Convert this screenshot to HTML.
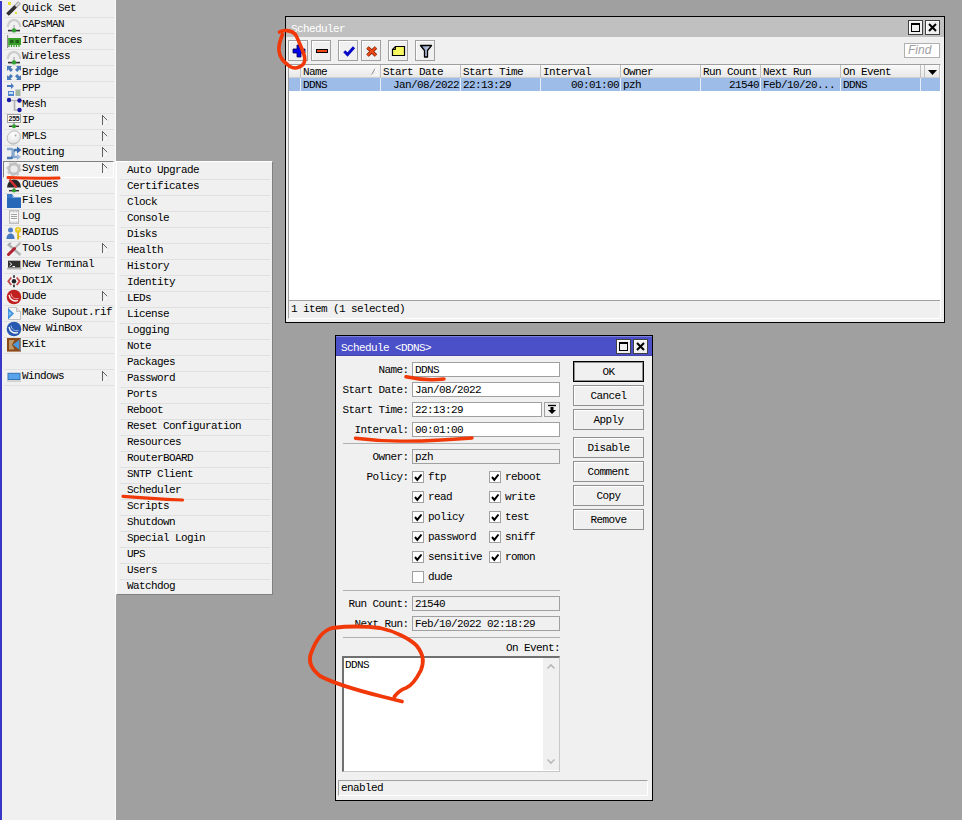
<!DOCTYPE html>
<html><head><meta charset="utf-8"><title>WinBox</title>
<style>
html,body{margin:0;padding:0}
body{width:962px;height:820px;overflow:hidden;background:#a0a0a0;position:relative;color:#000;font-family:'Liberation Mono',monospace;font-size:11px;letter-spacing:-0.6px;}
div,span{box-sizing:border-box}
.a{position:absolute}
.t{position:absolute;white-space:pre;line-height:16px;height:16px}
.side{left:0;top:0;width:116px;height:820px;background:#f0f0f0}
.sep{position:absolute;height:1px;background:#e0e0e0}
.win{position:absolute;background:#f0f0f0;border:1px solid #000}
.tb{position:absolute;width:15px;height:15px;background:#f0f0f0;border:1px solid #404040;box-shadow:inset 1px 1px 0 #fff}
.btn{position:absolute;width:20px;height:21px;border:1px solid #a0a0a0;background:#f0f0f0;box-shadow:inset 1px 1px 0 #fff}
.fld{position:absolute;height:15px;border:1px solid #a0a0a0;background:#fff;line-height:15px;padding-left:2px;white-space:pre}
.ro{background:#f0f0f0}
.lbl{position:absolute;text-align:right;white-space:pre;line-height:15px;height:15px;padding-top:1px}
.pb{position:absolute;left:237px;width:71px;height:21px;border:1px solid #909090;background:#f0f0f0;text-align:center;line-height:21px;box-shadow:inset 1px 1px 0 #fff}
.cb{position:absolute;width:12px;height:12px;border:1px solid #a0a0a0;background:#fff}
.hs{position:absolute;top:0;width:1px;height:13px;background:#c0c0c0}
.rs{position:absolute;top:0;width:1px;height:13px;background:#e8eef8}
</style></head><body>
<div class="a side"><div class="a" style="left:0;top:1px;width:2px;height:819px;background:#3838c8"></div><div class="a" style="left:115px;top:0;width:1px;height:820px;background:#fafafa"></div><div class="sep" style="left:4px;top:17px;width:110px"></div><svg class="a" style="left:6px;top:1px" width="16" height="16" viewBox="0 0 16 16"><path d="M1.5 13.5L10 5" stroke="#303030" stroke-width="3.8" stroke-linecap="butt"/><path d="M9.5 5.5L13.500 1.500" stroke="#a0a0a0" stroke-width="3.800"/><path d="M10 5L13 2" stroke="#e8e8e8" stroke-width="1.4"/><rect x="2" y="1" width="3" height="3" fill="#e0e030"/><rect x="9" y="11" width="2" height="2" fill="#e0e030"/></svg><span class="t" style="left:22px;top:0px">Quick Set</span><div class="sep" style="left:4px;top:33px;width:110px"></div><svg class="a" style="left:6px;top:17px" width="16" height="16" viewBox="0 0 16 16"><path d="M1.800 10A6.200 7 0 0 1 14.200 10" fill="none" stroke="#cccccc" stroke-width="2.200"/><rect x="7.3" y="8" width="1.4" height="6" fill="#b0b0b0"/><rect x="2" y="12.800" width="12" height="1.600" fill="#303030"/><circle cx="8" cy="13.400" r="2.200" fill="#30a030"/></svg><span class="t" style="left:22px;top:16px">CAPsMAN</span><div class="sep" style="left:4px;top:49px;width:110px"></div><svg class="a" style="left:6px;top:33px" width="16" height="16" viewBox="0 0 16 16"><rect x="1" y="2" width="1.2" height="13" fill="#909090"/><rect x="2.2" y="5" width="12.8" height="7" fill="#38a028"/><rect x="4" y="7" width="3.5" height="3" fill="#206018"/><rect x="9.5" y="7" width="3.5" height="3" fill="#206018"/><path d="M3 12v2M5.5 12v2M8 12v2M10.5 12v2M13 12v2" stroke="#38a028" stroke-width="1.2"/></svg><span class="t" style="left:22px;top:32px">Interfaces</span><div class="sep" style="left:4px;top:65px;width:110px"></div><svg class="a" style="left:6px;top:49px" width="16" height="16" viewBox="0 0 16 16"><path d="M1.800 10A6.200 7 0 0 1 14.200 10" fill="none" stroke="#cccccc" stroke-width="2.200"/><rect x="7.3" y="8" width="1.4" height="6" fill="#b0b0b0"/><rect x="2" y="12.800" width="12" height="1.600" fill="#303030"/><circle cx="8" cy="13.400" r="2.200" fill="#30a030"/></svg><span class="t" style="left:22px;top:48px">Wireless</span><div class="sep" style="left:4px;top:81px;width:110px"></div><svg class="a" style="left:6px;top:65px" width="16" height="16" viewBox="0 0 16 16"><g fill="#4a7ab8"><path d="M1 1h5L4.6 2.4 7 4.8 4.8 7 2.4 4.6 1 6z"/><path d="M15 1v5l-1.4-1.4L11.2 7 9 4.8l2.4-2.4L10 1z"/><path d="M1 15v-5l1.4 1.4L4.800 9 7 11.2 4.600 13.600 6 15z"/><path d="M15 15h-5l1.4-1.4L9 11.2 11.2 9l2.400 2.400L15 10z"/></g></svg><span class="t" style="left:22px;top:64px">Bridge</span><div class="sep" style="left:4px;top:97px;width:110px"></div><svg class="a" style="left:6px;top:81px" width="16" height="16" viewBox="0 0 16 16"><path d="M1 4h4V2l3 3-3 3V6H1z" fill="#4878c0"/><rect x="2" y="10" width="6" height="5" fill="#5088d0"/><rect x="3" y="11" width="4" height="2" fill="#c8e0f8"/><rect x="9" y="8" width="6" height="7" fill="#d0d0d0"/><path d="M10 10h4M10 12h4M10 14h4" stroke="#70a070" stroke-width="1"/></svg><span class="t" style="left:22px;top:80px">PPP</span><div class="sep" style="left:4px;top:113px;width:110px"></div><svg class="a" style="left:6px;top:97px" width="16" height="16" viewBox="0 0 16 16"><path d="M3 3.500H13" fill="none" stroke="#b0b0b0" stroke-width="1.400"/><path d="M8.500 3v10h5" fill="none" stroke="#b0b0b0" stroke-width="1.600"/><circle cx="3" cy="3" r="2.2" fill="#1818a0"/><circle cx="13.500" cy="3.500" r="2.200" fill="#1818a0"/><circle cx="13.500" cy="13" r="2.200" fill="#1818a0"/></svg><span class="t" style="left:22px;top:96px">Mesh</span><div class="sep" style="left:4px;top:129px;width:110px"></div><svg class="a" style="left:6px;top:113px" width="16" height="16" viewBox="0 0 16 16"><rect x="1.5" y="1.5" width="13" height="8" fill="#fff" stroke="#a0a0a0" stroke-width="1"/><text x="8" y="8.300" font-family="Liberation Sans,sans-serif" font-size="7" font-weight="bold" text-anchor="middle" fill="#202020" letter-spacing="-0.3">255</text><rect x="7.4" y="9" width="1.2" height="4" fill="#909090"/><rect x="3" y="12.600" width="10" height="1.400" fill="#303030"/><circle cx="8" cy="13.300" r="2" fill="#30a030"/></svg><span class="t" style="left:22px;top:112px">IP</span><svg style="position:absolute;left:102px;top:115px" width="7" height="11" viewBox="0 0 7 11"><path d="M0.5 0V10" stroke="#606060" stroke-width="1" fill="none"/><path d="M0.5 0.5L5.5 5.5" stroke="#606060" stroke-width="1" fill="none"/><path d="M5.5 5.5L1.5 9.500" stroke="#ffffff" stroke-width="1" fill="none"/></svg><div class="sep" style="left:4px;top:145px;width:110px"></div><svg class="a" style="left:6px;top:129px" width="16" height="16" viewBox="0 0 16 16"><defs><radialGradient id="mg" cx="0.35" cy="0.35" r="0.8"><stop offset="0" stop-color="#ffffff"/><stop offset="0.7" stop-color="#e8e8e8"/><stop offset="1" stop-color="#a8a8a8"/></radialGradient></defs><ellipse cx="7.800" cy="8.500" rx="6.300" ry="7" fill="url(#mg)" stroke="#b4b4b4" stroke-width="0.800" transform="rotate(40 7.8 8.5)"/><circle cx="9.500" cy="6.500" r="1" fill="#a8a8a8"/></svg><span class="t" style="left:22px;top:128px">MPLS</span><svg style="position:absolute;left:102px;top:131px" width="7" height="11" viewBox="0 0 7 11"><path d="M0.5 0V10" stroke="#606060" stroke-width="1" fill="none"/><path d="M0.5 0.5L5.5 5.5" stroke="#606060" stroke-width="1" fill="none"/><path d="M5.5 5.5L1.5 9.500" stroke="#ffffff" stroke-width="1" fill="none"/></svg><div class="sep" style="left:4px;top:161px;width:110px"></div><svg class="a" style="left:6px;top:145px" width="16" height="16" viewBox="0 0 16 16"><path d="M1 13h4c2 0 2-2 2-4s0-4 2-4h3" fill="none" stroke="#4878b0" stroke-width="2.600"/><path d="M1 4h4c2 0 2 2 2 4s0 4 2 4h3" fill="none" stroke="#88a8d0" stroke-width="2.400"/><path d="M11 1.500l4.500 3.500L11 8.500z" fill="#3868b0"/><path d="M11 9l4 3-4 3z" fill="#a0b8d8"/></svg><span class="t" style="left:22px;top:144px">Routing</span><svg style="position:absolute;left:102px;top:147px" width="7" height="11" viewBox="0 0 7 11"><path d="M0.5 0V10" stroke="#606060" stroke-width="1" fill="none"/><path d="M0.5 0.5L5.5 5.5" stroke="#606060" stroke-width="1" fill="none"/><path d="M5.5 5.5L1.5 9.500" stroke="#ffffff" stroke-width="1" fill="none"/></svg><div class="sep" style="left:4px;top:177px;width:110px"></div><div class="a" style="left:3px;top:161px;width:111px;height:17px;border:1px solid;border-color:#808080 #fff #fff #808080;background:#f4f4f4"></div><svg class="a" style="left:6px;top:161px" width="16" height="16" viewBox="0 0 16 16"><circle cx="8" cy="8" r="5" fill="none" stroke="#c0c0c0" stroke-width="3"/><circle cx="8" cy="8" r="6.800" fill="none" stroke="#c8c8c8" stroke-width="1.600" stroke-dasharray="2.6 2.7"/><circle cx="8" cy="8" r="3" fill="#ececec"/></svg><span class="t" style="left:22px;top:160px">System</span><svg style="position:absolute;left:102px;top:163px" width="7" height="11" viewBox="0 0 7 11"><path d="M0.5 0V10" stroke="#606060" stroke-width="1" fill="none"/><path d="M0.5 0.5L5.5 5.5" stroke="#606060" stroke-width="1" fill="none"/><path d="M5.5 5.5L1.5 9.500" stroke="#ffffff" stroke-width="1" fill="none"/></svg><div class="sep" style="left:4px;top:193px;width:110px"></div><svg class="a" style="left:6px;top:177px" width="16" height="16" viewBox="0 0 16 16"><path d="M1 10.500A7 8 0 0 1 15 10.500z" fill="#282828"/><path d="M3.500 2.500l7 8" stroke="#d83030" stroke-width="2.400"/><rect x="7.400" y="10" width="1.200" height="4" fill="#909090"/><rect x="3" y="13" width="10" height="1.400" fill="#303030"/><circle cx="8" cy="13.600" r="2" fill="#30a030"/></svg><span class="t" style="left:22px;top:176px">Queues</span><div class="sep" style="left:4px;top:209px;width:110px"></div><svg class="a" style="left:6px;top:193px" width="16" height="16" viewBox="0 0 16 16"><path d="M1 1h5l2 3h7v11H1z" fill="#3878c8"/><path d="M1 5h14v10H1z" fill="#2868b8"/><path d="M6 2l2 2.500h7V5H7z" fill="#a8c8f0"/></svg><span class="t" style="left:22px;top:192px">Files</span><div class="sep" style="left:4px;top:225px;width:110px"></div><svg class="a" style="left:6px;top:209px" width="16" height="16" viewBox="0 0 16 16"><rect x="3.500" y="1.500" width="9" height="13" fill="#f8f8f8" stroke="#b8b8b8" stroke-width="1"/><path d="M5 5.500h6M5 7.500h6M5 9.500h6" stroke="#a0a0a0" stroke-width="1"/><path d="M3.500 2.500h9M3.500 13.500h9" stroke="#c8c8c8" stroke-width="2" stroke-dasharray="2 1"/></svg><span class="t" style="left:22px;top:208px">Log</span><div class="sep" style="left:4px;top:241px;width:110px"></div><svg class="a" style="left:6px;top:225px" width="16" height="16" viewBox="0 0 16 16"><circle cx="4.500" cy="5" r="2.500" fill="#5080c8"/><path d="M0.500 14c0-4 2-5.500 4-5.500s4 1.500 4 5.500z" fill="#4878c0"/><circle cx="12" cy="5" r="3" fill="#e8c820"/><circle cx="12" cy="4.500" r="1" fill="#f8f0a0"/><rect x="11.200" y="7.500" width="1.800" height="7" fill="#d8b818"/><rect x="13" y="11" width="1.500" height="1.200" fill="#d8b818"/></svg><span class="t" style="left:22px;top:224px">RADIUS</span><div class="sep" style="left:4px;top:257px;width:110px"></div><svg class="a" style="left:6px;top:241px" width="16" height="16" viewBox="0 0 16 16"><path d="M3 4l11.500 10" stroke="#b0b4b4" stroke-width="2.400"/><path d="M1.300 4.800a3 3 0 0 1 4.500-2.800L4 4 5.500 5.500z" fill="#a8acac"/><path d="M14.500 1.500L8 8" stroke="#b8b8b8" stroke-width="2"/><path d="M8.500 7.500L2.500 13.500" stroke="#b02030" stroke-width="3" stroke-linecap="round"/></svg><span class="t" style="left:22px;top:240px">Tools</span><svg style="position:absolute;left:102px;top:243px" width="7" height="11" viewBox="0 0 7 11"><path d="M0.5 0V10" stroke="#606060" stroke-width="1" fill="none"/><path d="M0.5 0.5L5.5 5.5" stroke="#606060" stroke-width="1" fill="none"/><path d="M5.5 5.5L1.5 9.500" stroke="#ffffff" stroke-width="1" fill="none"/></svg><div class="sep" style="left:4px;top:273px;width:110px"></div><svg class="a" style="left:6px;top:257px" width="16" height="16" viewBox="0 0 16 16"><rect x="2" y="3.700" width="12.400" height="7" fill="#303030"/><rect x="1" y="10.700" width="14.200" height="1.800" fill="#b4b4b4"/><path d="M3.500 5.300l2.300 1.900-2.300 1.900" fill="none" stroke="#f8f8f8" stroke-width="1"/><path d="M6.500 9.500h2.500" stroke="#f8f8f8" stroke-width="1"/></svg><span class="t" style="left:22px;top:256px">New Terminal</span><div class="sep" style="left:4px;top:289px;width:110px"></div><svg class="a" style="left:6px;top:273px" width="16" height="16" viewBox="0 0 16 16"><circle cx="8" cy="8.200" r="2.200" fill="#202020"/><rect x="7.200" y="2.200" width="1.600" height="2.600" fill="#202020"/><rect x="7.200" y="11.600" width="1.600" height="2.600" fill="#202020"/><path d="M5.300 4.500L2.300 8.200 5.300 12M10.700 4.500L13.700 8.200 10.700 12" stroke="#c04848" stroke-width="1.800" fill="none"/></svg><span class="t" style="left:22px;top:272px">Dot1X</span><div class="sep" style="left:4px;top:305px;width:110px"></div><svg class="a" style="left:6px;top:289px" width="16" height="16" viewBox="0 0 16 16"><circle cx="8" cy="8" r="7.300" fill="#c02020"/><path d="M3 6c1 5 5 7 9 5.500" fill="none" stroke="#fff" stroke-width="1.300"/><path d="M5 4.500c0.500 4 3.500 6 7.500 5" fill="none" stroke="#f0b0b0" stroke-width="1"/></svg><span class="t" style="left:22px;top:288px">Dude</span><svg style="position:absolute;left:102px;top:291px" width="7" height="11" viewBox="0 0 7 11"><path d="M0.5 0V10" stroke="#606060" stroke-width="1" fill="none"/><path d="M0.5 0.5L5.5 5.5" stroke="#606060" stroke-width="1" fill="none"/><path d="M5.5 5.5L1.5 9.500" stroke="#ffffff" stroke-width="1" fill="none"/></svg><div class="sep" style="left:4px;top:321px;width:110px"></div><svg class="a" style="left:6px;top:305px" width="16" height="16" viewBox="0 0 16 16"><path d="M2.500 2.500h8l4 4v8h-12z" fill="#f4f4f4" stroke="#c0c0c0" stroke-width="1"/><path d="M10.500 2.500v4h4" fill="#e0e0e0" stroke="#c0c0c0" stroke-width="1"/><path d="M2 3L8 8.600 2 14.500z" fill="#3c8cdc"/><path d="M2.800 6L6 8.600 2.800 11.500z" fill="#78c0f4"/></svg><span class="t" style="left:22px;top:304px">Make Supout.rif</span><div class="sep" style="left:4px;top:337px;width:110px"></div><svg class="a" style="left:6px;top:321px" width="16" height="16" viewBox="0 0 16 16"><circle cx="8" cy="8" r="7.300" fill="#2858b0"/><path d="M3 6c1 5 5 7 9 5.500" fill="none" stroke="#fff" stroke-width="1.300"/><path d="M5 4.500c0.500 4 3.500 6 7.500 5" fill="none" stroke="#a8c0e8" stroke-width="1"/></svg><span class="t" style="left:22px;top:320px">New WinBox</span><div class="sep" style="left:4px;top:353px;width:110px"></div><svg class="a" style="left:6px;top:337px" width="16" height="16" viewBox="0 0 16 16"><rect x="1" y="1" width="14" height="13.600" fill="#8a4a18"/><path d="M3 3H8.500L6 7.800 8.500 12.600H3z" fill="#c09868"/><path d="M13.500 2.500V13L15 14.600V1z" fill="#808890"/><path d="M6.800 7.800L13 3V12.600z" fill="#4898e0"/></svg><span class="t" style="left:22px;top:336px">Exit</span><div class="sep" style="left:4px;top:369px;width:110px"></div><div class="sep" style="left:4px;top:385px;width:110px"></div><svg class="a" style="left:6px;top:369px" width="16" height="16" viewBox="0 0 16 16"><rect x="2" y="4.300" width="12" height="6.200" fill="#58a4ec" stroke="#3474b4" stroke-width="1"/><rect x="1" y="11.500" width="14" height="1.200" fill="#c0c0c0"/></svg><span class="t" style="left:22px;top:368px">Windows</span><svg style="position:absolute;left:102px;top:371px" width="7" height="11" viewBox="0 0 7 11"><path d="M0.5 0V10" stroke="#606060" stroke-width="1" fill="none"/><path d="M0.5 0.5L5.5 5.5" stroke="#606060" stroke-width="1" fill="none"/><path d="M5.5 5.5L1.5 9.500" stroke="#ffffff" stroke-width="1" fill="none"/></svg></div>
<div class="a" style="left:116px;top:161px;width:157px;height:434px;background:#f0f0f0;border:1px solid;border-color:#fff #808080 #808080 #fff"><span class="t" style="left:10px;top:0px">Auto Upgrade</span><div class="sep" style="left:3px;top:17px;width:150px"></div><span class="t" style="left:10px;top:16px">Certificates</span><div class="sep" style="left:3px;top:33px;width:150px"></div><span class="t" style="left:10px;top:32px">Clock</span><div class="sep" style="left:3px;top:49px;width:150px"></div><span class="t" style="left:10px;top:48px">Console</span><div class="sep" style="left:3px;top:65px;width:150px"></div><span class="t" style="left:10px;top:64px">Disks</span><div class="sep" style="left:3px;top:81px;width:150px"></div><span class="t" style="left:10px;top:80px">Health</span><div class="sep" style="left:3px;top:97px;width:150px"></div><span class="t" style="left:10px;top:96px">History</span><div class="sep" style="left:3px;top:113px;width:150px"></div><span class="t" style="left:10px;top:112px">Identity</span><div class="sep" style="left:3px;top:129px;width:150px"></div><span class="t" style="left:10px;top:128px">LEDs</span><div class="sep" style="left:3px;top:145px;width:150px"></div><span class="t" style="left:10px;top:144px">License</span><div class="sep" style="left:3px;top:161px;width:150px"></div><span class="t" style="left:10px;top:160px">Logging</span><div class="sep" style="left:3px;top:177px;width:150px"></div><span class="t" style="left:10px;top:176px">Note</span><div class="sep" style="left:3px;top:193px;width:150px"></div><span class="t" style="left:10px;top:192px">Packages</span><div class="sep" style="left:3px;top:209px;width:150px"></div><span class="t" style="left:10px;top:208px">Password</span><div class="sep" style="left:3px;top:225px;width:150px"></div><span class="t" style="left:10px;top:224px">Ports</span><div class="sep" style="left:3px;top:241px;width:150px"></div><span class="t" style="left:10px;top:240px">Reboot</span><div class="sep" style="left:3px;top:257px;width:150px"></div><span class="t" style="left:10px;top:256px">Reset Configuration</span><div class="sep" style="left:3px;top:273px;width:150px"></div><span class="t" style="left:10px;top:272px">Resources</span><div class="sep" style="left:3px;top:289px;width:150px"></div><span class="t" style="left:10px;top:288px">RouterBOARD</span><div class="sep" style="left:3px;top:305px;width:150px"></div><span class="t" style="left:10px;top:304px">SNTP Client</span><div class="sep" style="left:3px;top:321px;width:150px"></div><span class="t" style="left:10px;top:320px">Scheduler</span><div class="sep" style="left:3px;top:337px;width:150px"></div><span class="t" style="left:10px;top:336px">Scripts</span><div class="sep" style="left:3px;top:353px;width:150px"></div><span class="t" style="left:10px;top:352px">Shutdown</span><div class="sep" style="left:3px;top:369px;width:150px"></div><span class="t" style="left:10px;top:368px">Special Login</span><div class="sep" style="left:3px;top:385px;width:150px"></div><span class="t" style="left:10px;top:384px">UPS</span><div class="sep" style="left:3px;top:401px;width:150px"></div><span class="t" style="left:10px;top:400px">Users</span><div class="sep" style="left:3px;top:417px;width:150px"></div><span class="t" style="left:10px;top:416px">Watchdog</span></div>
<div class="win" style="left:285px;top:16px;width:660px;height:307px"><div class="a" style="left:0;top:0;width:658px;height:20px;background:#c0c0c0"></div><span class="t" style="left:5px;top:4px;color:#fff">Scheduler</span><div class="tb" style="left:622px;top:3px"><svg width="13" height="13" viewBox="0 0 13 13" style="display:block"><rect x="2.500" y="2.500" width="8" height="8" fill="none" stroke="#000"/><rect x="2" y="2" width="9" height="2" fill="#000"/></svg></div><div class="tb" style="left:639px;top:3px"><svg width="13" height="13" viewBox="0 0 13 13" style="display:block"><path d="M3 3l7 7M10 3l-7 7" stroke="#000" stroke-width="2"/></svg></div><div class="btn" style="left:2px;top:23px"><svg width="20" height="20" viewBox="0 0 20 20" style="position:absolute;left:-1px;top:-1px"><path d="M9 5h4v4h4v4h-4v4H9v-4H5V9h4z" fill="#0000e8" stroke="#000050" stroke-width="0.8"/></svg></div><div class="btn" style="left:25px;top:23px"><svg width="20" height="20" viewBox="0 0 20 20" style="position:absolute;left:-1px;top:-1px"><rect x="5.500" y="9.500" width="11" height="3" fill="#f04818" stroke="#000" stroke-width="1"/></svg></div><div class="btn" style="left:52px;top:23px"><svg width="20" height="20" viewBox="0 0 20 20" style="position:absolute;left:-1px;top:-1px"><path d="M6.300 11.300L9.500 14.500L16 7.200" fill="none" stroke="#0808c8" stroke-width="3"/></svg></div><div class="btn" style="left:75px;top:23px"><svg width="20" height="20" viewBox="0 0 20 20" style="position:absolute;left:-1px;top:-1px"><path d="M6.500 7.500L15 15.500M15 7.500L6.500 15.500" fill="none" stroke="#702000" stroke-width="3.600"/><path d="M6.500 7.500L15 15.500M15 7.500L6.500 15.500" fill="none" stroke="#f04818" stroke-width="2.200"/></svg></div><div class="btn" style="left:102px;top:23px"><svg width="20" height="20" viewBox="0 0 20 20" style="position:absolute;left:-1px;top:-1px"><path d="M7.500 6.500H16.500V15.500H4.500V9.500z" fill="#f8f860" stroke="#000" stroke-width="1.200"/><path d="M4.500 9.500H7.500V6.500" fill="none" stroke="#000" stroke-width="1"/></svg></div><div class="btn" style="left:129px;top:23px"><svg width="20" height="20" viewBox="0 0 20 20" style="position:absolute;left:-1px;top:-1px"><defs><linearGradient id="fg" x1="0" y1="0" x2="1" y2="0"><stop offset="0" stop-color="#7888b0"/><stop offset="1" stop-color="#e0e8f8"/></linearGradient></defs><path d="M5.500 5.500H16.500L12.500 10.500V17H9.500V10.500z" fill="url(#fg)" stroke="#000" stroke-width="1.300" stroke-linejoin="round"/></svg></div><div class="a" style="left:618px;top:26px;width:36px;height:15px;border:1px solid #b0b0b0;background:#fff;font:italic 12px 'Liberation Sans',sans-serif;letter-spacing:0;color:#a0a0a0;line-height:13px;padding-left:3px">Find</div><div class="a" style="left:2px;top:47px;width:653px;height:255px;border:1px solid;border-color:#a0a0a0 #fff #fff #a0a0a0"></div><div class="a" style="left:2px;top:48px;width:652px;height:235px;background:#fff"><div class="a" style="left:0;top:0;width:652px;height:13px;background:linear-gradient(#fafafa,#e8e8e8);border-bottom:1px solid #d0d0d0"></div><div class="hs" style="left:12px"></div><span class="t" style="left:15px;top:-1px;">Name</span><div class="hs" style="left:92px"></div><span class="t" style="left:95px;top:-1px;">Start Date</span><div class="hs" style="left:172px"></div><span class="t" style="left:175px;top:-1px;">Start Time</span><div class="hs" style="left:252px"></div><span class="t" style="left:255px;top:-1px;">Interval</span><div class="hs" style="left:332px"></div><span class="t" style="left:335px;top:-1px;">Owner</span><div class="hs" style="left:412px"></div><span class="t" style="left:415px;top:-1px;">Run Count</span><div class="hs" style="left:472px"></div><span class="t" style="left:475px;top:-1px;">Next Run</span><div class="hs" style="left:552px"></div><span class="t" style="left:555px;top:-1px;">On Event</span><div class="hs" style="left:632px"></div><div class="hs" style="left:636px"></div><div class="hs" style="left:651px"></div><svg class="a" style="left:637px;top:0" width="14" height="13" viewBox="0 0 14 13"><path d="M3 5h9L7.500 10z" fill="#000"/></svg><svg class="a" style="left:83px;top:2px" width="9" height="9" viewBox="0 0 9 9"><path d="M0.500 8L4 1.500" stroke="#909090" fill="none"/><path d="M4 1.500L7.500 8H0.500" stroke="#fff" fill="none"/></svg><div class="a" style="left:0;top:13px;width:652px;height:13px;background:#9dbce8"><div class="rs" style="left:12px"></div><div class="rs" style="left:92px"></div><div class="rs" style="left:172px"></div><div class="rs" style="left:252px"></div><div class="rs" style="left:332px"></div><div class="rs" style="left:412px"></div><div class="rs" style="left:472px"></div><div class="rs" style="left:552px"></div><div class="rs" style="left:632px"></div><span class="t" style="left:15px;top:-1px;">DDNS</span><span class="t" style="left:92px;top:-1px;width:79px;text-align:right">Jan/08/2022</span><span class="t" style="left:175px;top:-1px;">22:13:29</span><span class="t" style="left:252px;top:-1px;width:79px;text-align:right">00:01:00</span><span class="t" style="left:335px;top:-1px;">pzh</span><span class="t" style="left:412px;top:-1px;width:59px;text-align:right">21540</span><span class="t" style="left:475px;top:-1px;">Feb/10/20...</span><span class="t" style="left:555px;top:-1px;">DDNS</span></div></div><div class="a" style="left:2px;top:283px;width:652px;height:1px;background:#a0a0a0"></div><div class="a" style="left:2px;top:47px;width:1px;height:254px;background:#a0a0a0"></div><span class="t" style="left:5px;top:284px;">1 item (1 selected)</span></div>
<div class="win" style="left:335px;top:335px;width:318px;height:466px"><div class="a" style="left:0;top:0;width:316px;height:20px;background:#4c50c8;border-top:1px solid #7c80d8;border-bottom:1px solid #4444a8"></div><span class="t" style="left:5px;top:4px;color:#fff">Schedule &lt;DDNS&gt;</span><div class="tb" style="left:280px;top:3px"><svg width="13" height="13" viewBox="0 0 13 13" style="display:block"><rect x="2.500" y="2.500" width="8" height="8" fill="none" stroke="#000"/><rect x="2" y="2" width="9" height="2" fill="#000"/></svg></div><div class="tb" style="left:297px;top:3px"><svg width="13" height="13" viewBox="0 0 13 13" style="display:block"><path d="M3 3l7 7M10 3l-7 7" stroke="#000" stroke-width="2"/></svg></div><div class="lbl" style="left:0;top:26px;width:72.500px">Name:</div><div class="fld" style="left:76px;top:26px;width:148px">DDNS</div><div class="lbl" style="left:0;top:46px;width:72.500px">Start Date:</div><div class="fld" style="left:76px;top:46px;width:148px">Jan/08/2022</div><div class="lbl" style="left:0;top:66px;width:72.500px">Start Time:</div><div class="fld" style="left:76px;top:66px;width:130px">22:13:29</div><div class="a" style="left:208px;top:66px;width:16px;height:15px;border:1px solid #a0a0a0;background:#f0f0f0"><svg width="14" height="13" viewBox="0 0 14 13" style="display:block"><path d="M3 2.500h8" stroke="#000" stroke-width="1.400"/><path d="M5.500 4h3v3h2.500L7 11 3 7h2.500z" fill="#000"/></svg></div><div class="lbl" style="left:0;top:86px;width:72.500px">Interval:</div><div class="fld" style="left:76px;top:86px;width:148px">00:01:00</div><div class="a" style="left:7px;top:107px;width:217px;height:1px;background:#b0b0b0"></div><div class="lbl" style="left:0;top:113px;width:72.500px">Owner:</div><div class="fld ro" style="left:76px;top:113px;width:148px">pzh</div><div class="lbl" style="left:0;top:133px;width:72.500px">Policy:</div><div class="cb" style="left:76px;top:135px"><svg width="10" height="10" viewBox="0 0 10 10" style="display:block"><path d="M2 5l2.300 2.800L8.500 2.500" fill="none" stroke="#000" stroke-width="2"/></svg></div><span class="t" style="left:92px;top:133px;">ftp</span><div class="cb" style="left:153px;top:135px"><svg width="10" height="10" viewBox="0 0 10 10" style="display:block"><path d="M2 5l2.300 2.800L8.500 2.500" fill="none" stroke="#000" stroke-width="2"/></svg></div><span class="t" style="left:169px;top:133px;">reboot</span><div class="cb" style="left:76px;top:155px"><svg width="10" height="10" viewBox="0 0 10 10" style="display:block"><path d="M2 5l2.300 2.800L8.500 2.500" fill="none" stroke="#000" stroke-width="2"/></svg></div><span class="t" style="left:92px;top:153px;">read</span><div class="cb" style="left:153px;top:155px"><svg width="10" height="10" viewBox="0 0 10 10" style="display:block"><path d="M2 5l2.300 2.800L8.500 2.500" fill="none" stroke="#000" stroke-width="2"/></svg></div><span class="t" style="left:169px;top:153px;">write</span><div class="cb" style="left:76px;top:175px"><svg width="10" height="10" viewBox="0 0 10 10" style="display:block"><path d="M2 5l2.300 2.800L8.500 2.500" fill="none" stroke="#000" stroke-width="2"/></svg></div><span class="t" style="left:92px;top:173px;">policy</span><div class="cb" style="left:153px;top:175px"><svg width="10" height="10" viewBox="0 0 10 10" style="display:block"><path d="M2 5l2.300 2.800L8.500 2.500" fill="none" stroke="#000" stroke-width="2"/></svg></div><span class="t" style="left:169px;top:173px;">test</span><div class="cb" style="left:76px;top:195px"><svg width="10" height="10" viewBox="0 0 10 10" style="display:block"><path d="M2 5l2.300 2.800L8.500 2.500" fill="none" stroke="#000" stroke-width="2"/></svg></div><span class="t" style="left:92px;top:193px;">password</span><div class="cb" style="left:153px;top:195px"><svg width="10" height="10" viewBox="0 0 10 10" style="display:block"><path d="M2 5l2.300 2.800L8.500 2.500" fill="none" stroke="#000" stroke-width="2"/></svg></div><span class="t" style="left:169px;top:193px;">sniff</span><div class="cb" style="left:76px;top:215px"><svg width="10" height="10" viewBox="0 0 10 10" style="display:block"><path d="M2 5l2.300 2.800L8.500 2.500" fill="none" stroke="#000" stroke-width="2"/></svg></div><span class="t" style="left:92px;top:213px;">sensitive</span><div class="cb" style="left:153px;top:215px"><svg width="10" height="10" viewBox="0 0 10 10" style="display:block"><path d="M2 5l2.300 2.800L8.500 2.500" fill="none" stroke="#000" stroke-width="2"/></svg></div><span class="t" style="left:169px;top:213px;">romon</span><div class="cb" style="left:76px;top:235px"></div><span class="t" style="left:92px;top:233px;">dude</span><div class="a" style="left:7px;top:254px;width:217px;height:1px;background:#b0b0b0"></div><div class="lbl" style="left:0;top:260px;width:72.500px">Run Count:</div><div class="fld ro" style="left:76px;top:260px;width:148px">21540</div><div class="lbl" style="left:0;top:280px;width:72.500px">Next Run:</div><div class="fld ro" style="left:76px;top:280px;width:148px">Feb/10/2022 02:18:29</div><div class="a" style="left:7px;top:301px;width:217px;height:1px;background:#b0b0b0"></div><div class="lbl" style="left:100px;top:304px;width:124px">On Event:</div><div class="a" style="left:6px;top:320px;width:218px;height:116px;background:#fff;border:1px solid;border-color:#707070 #c8c8c8 #c8c8c8 #707070;border-top-width:2px;border-left-width:2px"><span class="t" style="left:1px;top:-1px;">DDNS</span><div class="a" style="right:0;top:0;width:16px;height:112px;background:#f0f0f0"><svg width="16" height="112" viewBox="0 0 16 112" style="display:block"><path d="M4.500 10.500L8 7l3.500 3.500M4.500 101.500L8 105l3.500-3.500" fill="none" stroke="#b8b8b8" stroke-width="1.600"/></svg></div></div><div class="a" style="left:2px;top:444px;width:310px;height:16px;border:1px solid;border-color:#a0a0a0 #fff #fff #a0a0a0"></div><span class="t" style="left:5px;top:444px;">enabled</span><div class="pb" style="top:25px;border-color:#000;box-shadow:inset 0 0 0 1px #909090">OK</div><div class="pb" style="top:49px;">Cancel</div><div class="pb" style="top:73px;">Apply</div><div class="pb" style="top:101px;">Disable</div><div class="pb" style="top:125px;">Comment</div><div class="pb" style="top:149px;">Copy</div><div class="pb" style="top:173px;">Remove</div></div>
<svg class="a" style="left:0;top:0;pointer-events:none" width="962" height="820" viewBox="0 0 962 820" fill="none" stroke="#f03808" stroke-linecap="round" stroke-linejoin="round"><path transform="translate(0 1)" d="M279.500 31C283 29 291 28.500 295.500 33.500C298.500 39 301 46 303.500 52C305 56 306 60 303 63.500C299 67.500 293 68.500 288 64C283 60 280 57 279 50C278.500 44 280 39 282.500 33.500" stroke-width="3.600"/><path d="M8 177.500Q30 178.800 59 178" stroke-width="3"/><path d="M123 496.300Q150 498.500 182.500 500" stroke-width="3.200"/><path d="M406 376.700Q425 381 444 379" stroke-width="3.500"/><path transform="translate(0 0.800)" d="M355.500 437.500C375 440 395 440.500 407 440.300C425 440.300 450 439 472 437.200" stroke-width="3.400"/><path d="M394.500 696.500C398 692 402 689 406 688C411 686 417 678 421 670C424 662 424 655 416.500 645.500C410 639 395 631 380 628C365 626 345 626.500 332 628C322 631 316 640 311.500 652C308 660 310 668 320 676C335 684 360 691 382 696.500L402 701.500" stroke-width="3.800"/></svg>
</body></html>
